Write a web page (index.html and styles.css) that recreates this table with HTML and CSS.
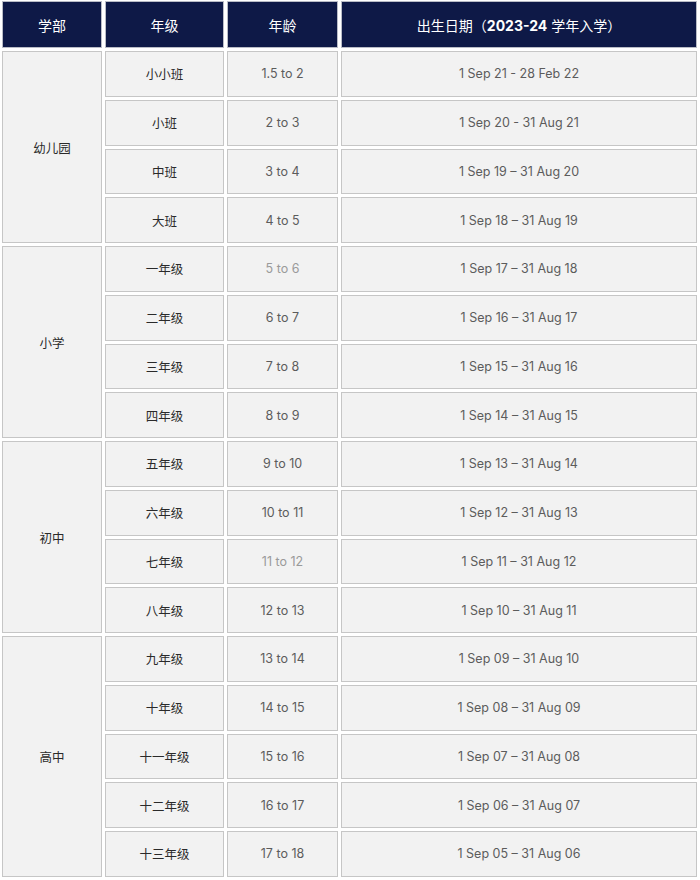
FILE: index.html
```html
<!DOCTYPE html>
<html lang="zh-CN">
<head>
<meta charset="utf-8">
<title>学部年级</title>
<link rel="stylesheet" href="styles.css">
</head>
<body>
<table class="grades">
  <colgroup>
    <col class="c1"><col class="c2"><col class="c3"><col class="c4">
  </colgroup>
  <thead>
    <tr>
      <th>学部</th>
      <th>年级</th>
      <th>年龄</th>
      <th>出生日期（<b>2023-24</b> 学年入学）</th>
    </tr>
  </thead>
  <tbody>
    <tr><td class="sec" rowspan="4">幼儿园</td><td class="gr">小小班</td><td>1.5 to 2</td><td>1 Sep 21 - 28 Feb 22</td></tr>
    <tr><td class="gr">小班</td><td>2 to 3</td><td>1 Sep 20 - 31 Aug 21</td></tr>
    <tr><td class="gr">中班</td><td>3 to 4</td><td>1 Sep 19 – 31 Aug 20</td></tr>
    <tr><td class="gr">大班</td><td>4 to 5</td><td>1 Sep 18 – 31 Aug 19</td></tr>
    <tr><td class="sec" rowspan="4">小学</td><td class="gr">一年级</td><td class="light">5 to 6</td><td>1 Sep 17 – 31 Aug 18</td></tr>
    <tr><td class="gr">二年级</td><td>6 to 7</td><td>1 Sep 16 – 31 Aug 17</td></tr>
    <tr><td class="gr">三年级</td><td>7 to 8</td><td>1 Sep 15 – 31 Aug 16</td></tr>
    <tr><td class="gr">四年级</td><td>8 to 9</td><td>1 Sep 14 – 31 Aug 15</td></tr>
    <tr><td class="sec" rowspan="4">初中</td><td class="gr">五年级</td><td>9 to 10</td><td>1 Sep 13 – 31 Aug 14</td></tr>
    <tr><td class="gr">六年级</td><td>10 to 11</td><td>1 Sep 12 – 31 Aug 13</td></tr>
    <tr><td class="gr">七年级</td><td class="light">11 to 12</td><td>1 Sep 11 – 31 Aug 12</td></tr>
    <tr><td class="gr">八年级</td><td>12 to 13</td><td>1 Sep 10 – 31 Aug 11</td></tr>
    <tr><td class="sec" rowspan="5">高中</td><td class="gr">九年级</td><td>13 to 14</td><td>1 Sep 09 – 31 Aug 10</td></tr>
    <tr><td class="gr">十年级</td><td>14 to 15</td><td>1 Sep 08 – 31 Aug 09</td></tr>
    <tr><td class="gr">十一年级</td><td>15 to 16</td><td>1 Sep 07 – 31 Aug 08</td></tr>
    <tr><td class="gr">十二年级</td><td>16 to 17</td><td>1 Sep 06 – 31 Aug 07</td></tr>
    <tr><td class="gr">十三年级</td><td>17 to 18</td><td>1 Sep 05 – 31 Aug 06</td></tr>
  </tbody>
</table>
</body>
</html>
```
FILE: styles.css
```css
html, body {
  margin: 0;
  padding: 0;
  background: #ffffff;
}

.grades {
  width: 701px;
  margin: -2px 0 0 -1px;
  table-layout: fixed;
  border-collapse: separate;
  border-spacing: 3px;
  font-family: Inter, "Noto Sans CJK SC", sans-serif;
  font-size: 12.5px;
  color: #5c5c5c;
}

.c1 { width: 100px; }
.c2 { width: 119px; }
.c3 { width: 111px; }
.c4 { width: 356px; }

.grades th,
.grades td {
  border: 1px solid #c6c6c6;
  text-align: center;
  vertical-align: middle;
  padding: 0;
  box-sizing: border-box;
}

.grades th {
  height: 47px;
  background: #0e1947;
  color: #ffffff;
  font-weight: normal;
  font-size: 14px;
  border-color: #b9bcc6;
}

.grades th b {
  font-weight: 700;
}

.grades td {
  height: 45.75px;
  background: #f2f2f2;
}

.grades td.gr,
.grades td.sec {
  color: #2a2a2a;
  font-size: 12.5px;
}

.grades td.light {
  color: #9a9a9a;
}
```
